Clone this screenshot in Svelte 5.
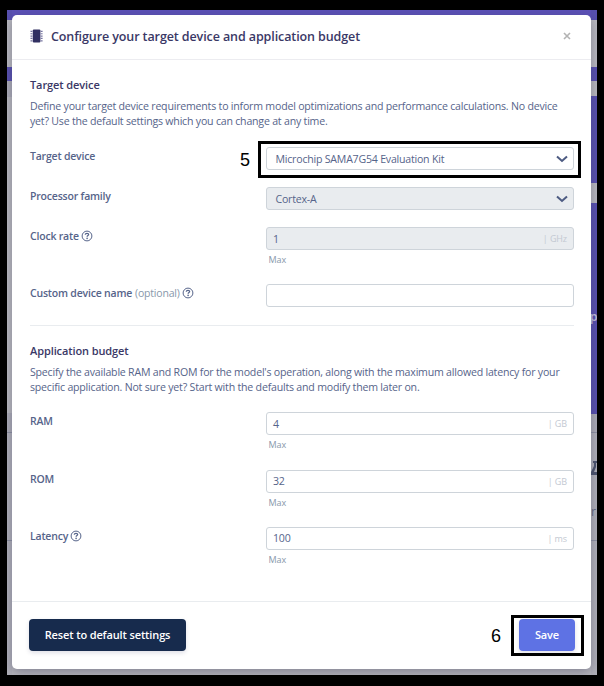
<script>
  const deviceRows = [
    { label: 'Target device', value: 'Microchip SAMA7G54 Evaluation Kit', kind: 'select', height: 40, marked: true },
    { label: 'Processor family', value: 'Cortex-A', kind: 'select', disabled: true, height: 40 },
    { label: 'Clock rate', help: true, value: '1', unit: 'GHz', disabled: true, height: 57 },
    { label: 'Custom device name', optional: true, help: true, value: '', height: 41 }
  ];
  const budgetRows = [
    { label: 'RAM', value: '4', unit: 'GB', height: 57.5 },
    { label: 'ROM', value: '32', unit: 'GB', height: 57 },
    { label: 'Latency', help: true, value: '100', unit: 'ms', height: 60 }
  ];
</script>

{#snippet helpIcon()}
  <svg class="help" viewBox="0 0 12 12">
    <circle cx="6" cy="6" r="4.9" fill="none" stroke="currentColor" stroke-width="1" />
    <path d="M4.2 4.8C4.3 3.7 5.1 3.3 6 3.3C6.9 3.3 7.7 3.8 7.7 4.6C7.7 5.6 6.1 5.6 6.1 6.8" fill="none" stroke="currentColor" stroke-width="1.2" />
    <circle cx="6.1" cy="8.4" r=".8" fill="currentColor" />
  </svg>
{/snippet}

{#snippet formRow(row)}
  <div class="row" style:height="{row.height}px">
    <div class="label">
      <span class="name">{row.label}</span>
      {#if row.optional}<span class="optional">(optional)</span>{/if}
      {#if row.help}{@render helpIcon()}{/if}
    </div>
    <div class="field">
      <div class="control" class:select={row.kind === 'select'} class:disabled={row.disabled}>
        <span>{row.value}</span>
        {#if row.unit}<span class="unit">| {row.unit}</span>{/if}
        {#if row.kind === 'select'}
          <svg class="chevron" viewBox="0 0 12 8"><path d="M1 1.4L6 6L11 1.4" fill="none" stroke="currentColor" stroke-width="2" /></svg>
        {/if}
      </div>
      {#if row.unit}<div class="max">Max</div>{/if}
      {#if row.marked}
        <div class="mark device-mark"></div>
        <div class="step device-step">5</div>
      {/if}
    </div>
  </div>
{/snippet}

<div class="screen">
  <div class="backdrop">
    <div class="edge left">
      <i class="purple" style:height="10px"></i>
      <i class="light" style:height="47px"></i>
      <i class="purple" style:height="14px"></i>
      <i class="mid" style:height="16px"></i>
      <i class="light" style:height="316px"></i>
      <i class="mid" style:height="19px"></i>
      <i class="dashed" style:height="108px"></i>
      <i class="dashed" style:height="135px"></i>
    </div>
    <div class="modal">
      <header>
        <svg class="chip" viewBox="0 0 13 14">
          <rect x="2.8" y="0.6" width="7.6" height="12.8" rx="1" fill="#302f61" />
          <path d="M1.5 1.8V12.6M11.6 1.8V12.6" stroke="#7674a0" stroke-width="2" stroke-dasharray="1.2 1.15" />
        </svg>
        <h1>Configure your target device and application budget</h1>
        <svg class="close" viewBox="0 0 8 8"><path d="M1 1L7 7M7 1L1 7" stroke="#b3b3b3" stroke-width="1.6" /></svg>
      </header>
      <main>
        <section>
          <h2>Target device</h2>
          <p>
            Define your target device requirements to inform model optimizations and performance calculations. No device<br />
            yet? Use the default settings which you can change at any time.
          </p>
          {#each deviceRows as row}{@render formRow(row)}{/each}
        </section>
        <section class="budget">
          <h2>Application budget</h2>
          <p>
            Specify the available RAM and ROM for the model's operation, along with the maximum allowed latency for your<br />
            specific application. Not sure yet? Start with the defaults and modify them later on.
          </p>
          {#each budgetRows as row}{@render formRow(row)}{/each}
        </section>
      </main>
      <footer>
        <button class="reset">Reset to default settings</button>
        <div class="save-wrap">
          <button class="save">Save</button>
          <div class="mark save-mark"></div>
          <div class="step save-step">6</div>
        </div>
      </footer>
    </div>
    <div class="edge right">
      <i class="purple" style:height="10px"></i>
      <i class="light" style:height="47px"></i>
      <i class="purple" style:height="14px"></i>
      <i class="light" style:height="15px"></i>
      <i class="purple" style:height="87px"></i>
      <i class="light" style:height="20px"></i>
      <i class="purple" style:height="211px"><b class="letter-p">p</b></i>
      <i class="mid" style:height="18px"></i>
      <i class="dashed" style:height="108px">
        <svg class="flask" viewBox="0 0 6 16"><path d="M2 1H6V3H5V7L3 12H6V15H0V12L3 6V3H2Z" fill="#4b536d" /></svg>
        <b class="letter-r">r</b>
      </i>
      <i class="dashed" style:height="135px"></i>
    </div>
  </div>
</div>

<style>
  :global(body) { background: #000; }
  * { box-sizing: border-box; }
  .screen {
    width: 604px;
    height: 686px;
    padding: 10px 7px 11px;
    background: #000;
    overflow: hidden;
    font-family: "Open Sans", "Noto Sans", sans-serif;
    font-size: 10.6px;
    letter-spacing: -.21px;
    color: #56648a;
  }
  .backdrop {
    display: flex;
    height: 665px;
    position: relative;
    background: linear-gradient(#5c51b8 0 10px, #b6b6bd 10px);
    overflow: hidden;
  }
  .edge { flex: none; height: 665px; overflow: hidden; }
  .left { width: 5px; }
  .right { width: 6px; }
  .edge i { display: block; font-style: normal; position: relative; }
  .purple { background: #5850b0; }
  .light { background: #b9b9bf; }
  .mid { background: #acacb7; }
  .dashed { background: #b0b0b9; border-top: 1px dashed #8d91a3; }
  .letter-p { position: absolute; top: 105px; left: -1px; font: 600 12px "Open Sans", sans-serif; color: #c9c7df; }
  .letter-r { position: absolute; top: 70px; left: 0; font: 400 12px "Open Sans", sans-serif; color: #626983; }
  .flask { position: absolute; top: 27px; left: 0; width: 6px; height: 16px; }
  .modal {
    flex: none;
    display: flex;
    flex-direction: column;
    width: 579px;
    height: 654px;
    margin-top: 5px;
    border-radius: 5px;
    background: #fff;
    box-shadow: 0 3px 12px rgba(50, 50, 80, .4), 0 -5px 0 #5c51b8;
    z-index: 1;
  }
  header {
    display: flex;
    align-items: center;
    height: 45px;
    padding: 0 20px 2px 18px;
    border-bottom: 1px solid #ececf0;
  }
  .chip { width: 13px; height: 14px; }
  h1 {
    flex: 1;
    margin: 2px 0 0 8px;
    font-size: 12.5px;
    letter-spacing: -.1px;
    font-weight: 600;
    line-height: 18px;
    white-space: nowrap;
    color: #3a3866;
  }
  .close { width: 8px; height: 8px; }
  main { flex: 1; padding: 16px 17px 0 18px; }
  h2 { margin: 0; font-size: 11px; letter-spacing: -.1px; font-weight: 600; line-height: 17px; color: #3a3866; }
  p { margin: 6px 0 18px; line-height: 15px; white-space: nowrap; }
  .row { display: flex; }
  .label {
    display: flex;
    align-items: center;
    gap: 3px;
    width: 236px;
    height: 18px;
    font-size: 10.5px;
    letter-spacing: -.2px;
    font-weight: 600;
    white-space: nowrap;
  }
  .optional { font-weight: 400; color: #8898aa; }
  .help { width: 12px; height: 12px; margin-left: -1px; }
  .field { position: relative; width: 308px; }
  .control {
    display: flex;
    align-items: center;
    justify-content: space-between;
    height: 23px;
    padding: 0 6px;
    border: 1px solid #ced4da;
    border-radius: 3px;
    background: #fff;
    font-size: 10.6px;
    letter-spacing: -.22px;
  }
  .select { padding: 0 5px 0 8.5px; }
  .disabled { background: #e9ecef; }
  .chevron { width: 12px; height: 8px; color: #4d5b82; }
  .unit { font-size: 9px; letter-spacing: -.1px; color: #c3c9d2; }
  .max { margin: 3px 0 0 2.5px; font-size: 9px; letter-spacing: -.1px; line-height: 13px; color: #8898aa; }
  .budget { padding-top: 16px; border-top: 1px solid #e9ecef; }
  .budget p { margin: 6px 0 17px; }
  footer {
    flex: none;
    display: flex;
    justify-content: space-between;
    height: 68px;
    padding: 17px 16px 0 17px;
    border-top: 1px solid #e9ecef;
  }
  button {
    height: 32px;
    padding: 0 0 1px;
    border: 0;
    border-radius: 4px;
    font: 600 11px "Open Sans", sans-serif;
    letter-spacing: -.13px;
    color: #fff;
    box-shadow: 0 2px 4px rgba(50, 50, 93, .15);
  }
  .reset { width: 157px; background: #172b4d; }
  .save { width: 56px; background: #5e72e4; }
  .save-wrap { position: relative; }
  .mark { position: absolute; border: 3px solid #000; }
  .device-mark { left: -8px; top: -6px; width: 323px; height: 37px; }
  .save-mark { left: -8px; top: -4px; width: 73px; height: 41px; }
  .step { position: absolute; font: 18px/20px "Liberation Sans", sans-serif; letter-spacing: 0; color: #000; }
  .device-step { left: -26px; top: 3px; }
  .save-step { left: -28px; top: 7px; }
</style>
